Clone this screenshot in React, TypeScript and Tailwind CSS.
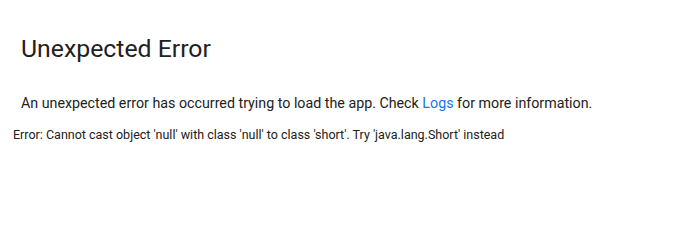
export default function App() {
  return (
    <div className="w-[690px] h-[217px] bg-white font-['Roboto',sans-serif] text-[#212121]">
      <div className="pt-[33px] px-[21px]">
        <h1 className="text-[24.8px] leading-[32px] font-normal">Unexpected Error</h1>
        <p className="mt-[28px] text-[14.25px] leading-[20px]">
          An unexpected error has occurred trying to load the app. Check{' '}
          <a href="#" className="text-[#1a73e8]">Logs</a> for more information.
        </p>
      </div>
      <div className="mt-[14px] px-[13px] text-[12.5px] leading-[16px]">
        Error: Cannot cast object 'null' with class 'null' to class 'short'. Try 'java.lang.Short' instead
      </div>
    </div>
  );
}
